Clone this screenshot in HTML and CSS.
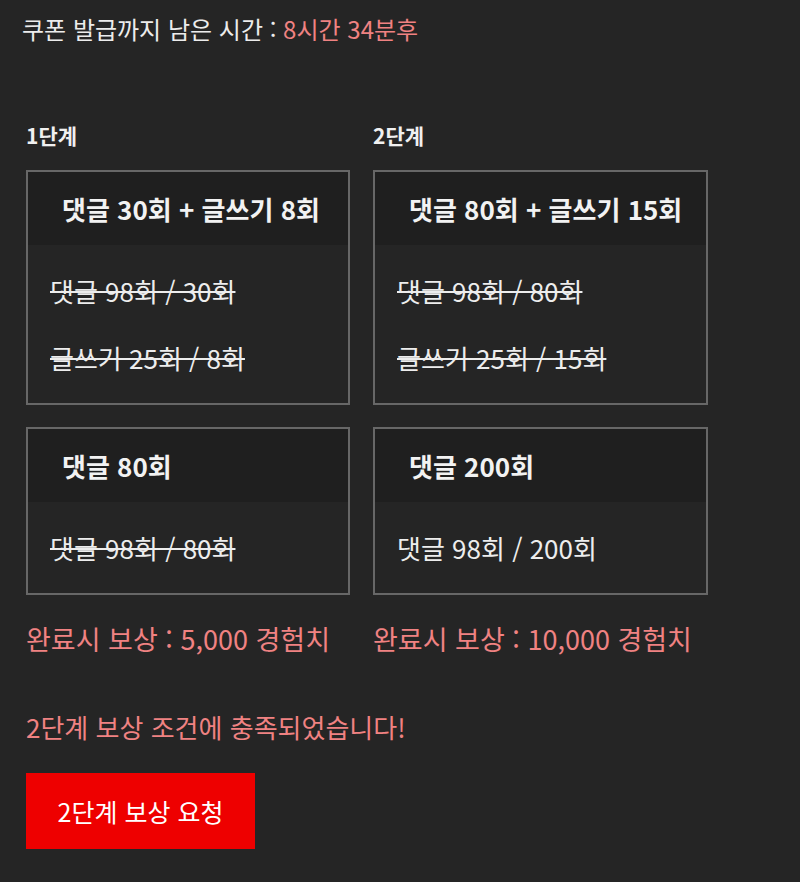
FILE: index.html
```html
<!DOCTYPE html>
<html lang="ko">
<head>
<meta charset="utf-8">
<link rel="stylesheet" href="styles.css">
</head>
<body>
<div class="page">
  <p class="timer">쿠폰 발급까지 남은 시간 : <span class="accent">8시간 34분후</span></p>
  <div class="stages">
    <div class="stage stage1">
      <h3 class="stage-title">1단계</h3>
      <div class="card">
        <div class="card-head">댓글 30회 + 글쓰기 8회</div>
        <div class="card-body">
          <p class="row done">댓글 98회 / 30회</p>
          <p class="row done">글쓰기 25회 / 8회</p>
        </div>
      </div>
      <div class="card">
        <div class="card-head">댓글 80회</div>
        <div class="card-body">
          <p class="row done">댓글 98회 / 80회</p>
        </div>
      </div>
      <p class="reward">완료시 보상 : 5,000 경험치</p>
    </div>
    <div class="stage stage2">
      <h3 class="stage-title">2단계</h3>
      <div class="card">
        <div class="card-head">댓글 80회 + 글쓰기 15회</div>
        <div class="card-body">
          <p class="row done">댓글 98회 / 80회</p>
          <p class="row done">글쓰기 25회 / 15회</p>
        </div>
      </div>
      <div class="card">
        <div class="card-head">댓글 200회</div>
        <div class="card-body">
          <p class="row">댓글 98회 / 200회</p>
        </div>
      </div>
      <p class="reward">완료시 보상 : 10,000 경험치</p>
    </div>
  </div>
  <p class="notice">2단계 보상 조건에 충족되었습니다!</p>
  <button class="claim">2단계 보상 요청</button>
</div>
</body>
</html>
```
FILE: styles.css
```css
html, body {
  margin: 0;
  padding: 0;
  background: #252525;
}
body {
  font-family: "Noto Sans CJK KR", "Noto Sans", sans-serif;
  color: #f0f0f0;
  height: 882px;
  overflow: hidden;
}
.page {
  padding: 12px 0 0 22px;
}
.timer {
  margin: 0;
  font-size: 24px;
  line-height: 34px;
  color: #ececec;
}
.accent {
  color: #f08282;
}
.stages {
  display: flex;
  gap: 23px;
  margin-top: 76px;
  padding-left: 4px;
}
.stage1 { width: 324px; }
.stage2 { width: 335px; }
.stage-title {
  margin: 0 0 22px 0;
  font-size: 21px;
  line-height: 26px;
  font-weight: 700;
  color: #f0f0f0;
}
.card {
  border: 2px solid #676767;
  margin-bottom: 22px;
}
.card-head {
  background: #1f1f1f;
  height: 73px;
  display: flex;
  align-items: center;
  padding-left: 34px;
  font-size: 26px;
  font-weight: 700;
  color: #f2f2f2;
}
.card-body {
  padding: 29px 0 28px 22px;
  display: flex;
  flex-direction: column;
  gap: 33px;
}
.row {
  margin: 0;
  font-size: 26px;
  line-height: 34px;
  color: #ededed;
}
.row.done {
  text-decoration: line-through;
  text-decoration-thickness: 2px;
}
.reward {
  margin: 26px 0 0 0;
  font-size: 27px;
  line-height: 36px;
  color: #f08282;
}
.notice {
  margin: 52px 0 0 4px;
  font-size: 26px;
  line-height: 36px;
  color: #f08282;
}
.claim {
  margin: 28px 0 0 4px;
  width: 229px;
  height: 76px;
  border: none;
  background: #ee0000;
  color: #ffffff;
  font-family: "Noto Sans CJK KR", "Noto Sans", sans-serif;
  font-size: 25px;
  padding: 0;
}
```
